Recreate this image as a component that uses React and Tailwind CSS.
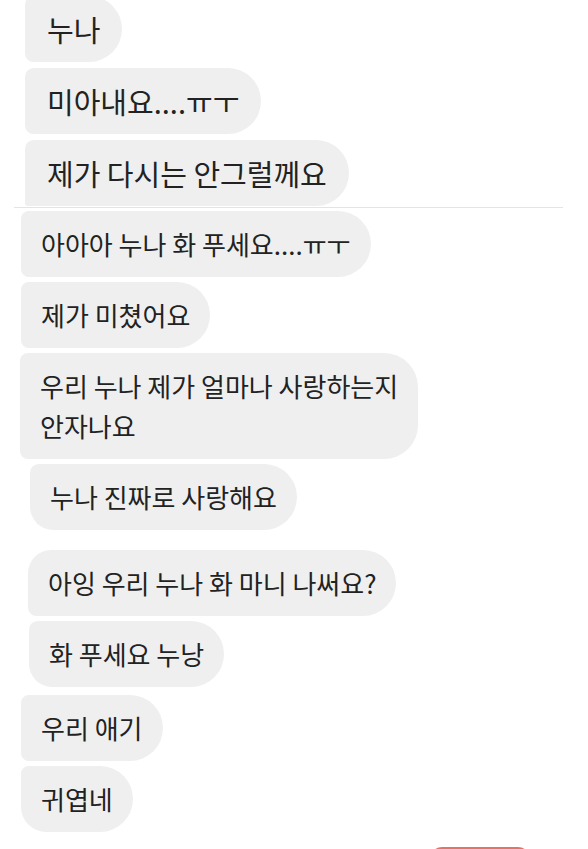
import React from 'react';

const messages = [
  { text: '누나', ml: 'ml-[25px]', mt: 'mt-[-4px]', corner: 'rounded-l-[9px]', big: true },
  { text: '미아내요....ㅠㅜ', ml: 'ml-[25px]', mt: 'mt-[6px]', corner: 'rounded-l-[9px]', big: true },
  { text: '제가 다시는 안그럴께요', ml: 'ml-[25px]', mt: 'mt-[6px]', corner: 'rounded-tl-[9px] rounded-bl-[3px]', big: true, divider: true },
  { text: '아아아 누나 화 푸세요....ㅠㅜ', ml: 'ml-[21px]', mt: 'mt-[3px]', corner: 'rounded-l-[8px]' },
  { text: '제가 미쳤어요', ml: 'ml-[21px]', mt: 'mt-[5px]', corner: 'rounded-l-[8px]' },
  { text: ['우리 누나 제가 얼마나 사랑하는지', '안자나요'], ml: 'ml-[20px]', mt: 'mt-[5px]', corner: 'rounded-l-[8px]' },
  { text: '누나 진짜로 사랑해요', ml: 'ml-[30px]', mt: 'mt-[5px]', corner: 'rounded-tl-[9px] rounded-bl-[24px]' },
  { text: '아잉 우리 누나 화 마니 나써요?', ml: 'ml-[28px]', mt: 'mt-[20px]', corner: 'rounded-tl-[24px] rounded-bl-[9px]' },
  { text: '화 푸세요 누낭', ml: 'ml-[29px]', mt: 'mt-[5px]', corner: 'rounded-tl-[9px] rounded-bl-[24px]' },
  { text: '우리 애기', ml: 'ml-[21px]', mt: 'mt-[8px]', corner: 'rounded-l-[8px]' },
  { text: '귀엽네', ml: 'ml-[21px]', mt: 'mt-[5px]', corner: 'rounded-tl-[8px] rounded-bl-[26px]' },
];

const Bubble = ({ text, ml, mt, corner, big }) => (
  <div
    className={`${ml} ${mt} ${corner} ${big ? 'px-[22px] text-[29px]' : 'px-[20px] text-[26px]'} self-start rounded-r-[34px] bg-[#efefef] py-[13px] leading-[40px] text-[#222222]`}
  >
    {Array.isArray(text) ? text.map((line, i) => <div key={i}>{line}</div>) : text}
  </div>
);

export default function App() {
  return (
    <div
      className="flex h-[849px] w-[588px] flex-col overflow-hidden bg-white"
      style={{ fontFamily: '"Noto Sans CJK KR", "Noto Sans", sans-serif' }}
    >
      {messages.map((m, i) => (
        <React.Fragment key={i}>
          <Bubble {...m} />
          {m.divider && <div className="ml-[14px] mt-[1px] h-px w-[549px] shrink-0 bg-[#e4e4e4]" />}
        </React.Fragment>
      ))}
      <div className="ml-[430px] mt-[15px] h-[24px] w-[100px] shrink-0 rounded-full bg-[#e27467]" />
    </div>
  );
}
